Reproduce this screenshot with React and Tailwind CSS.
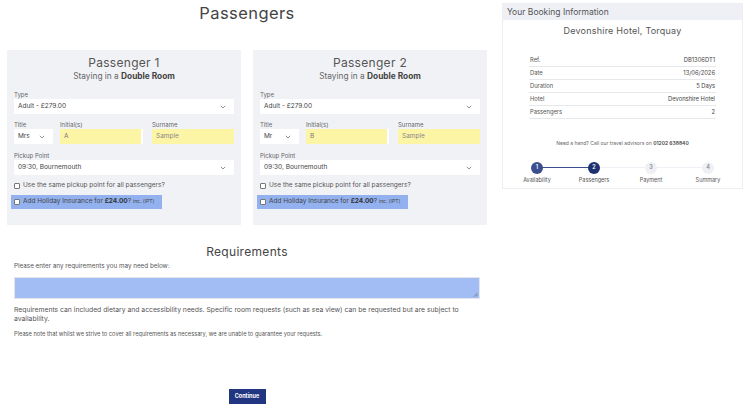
import React from 'react';

const body = { fontFamily: 'Inter, "Noto Sans", sans-serif' };

function Chevron() {
    return (
        <svg width="6" height="4" viewBox="0 0 6 4" className="shrink-0">
            <path d="M0.8 0.8 L3 3 L5.2 0.8" fill="none" stroke="#777" strokeWidth="0.8" />
        </svg>
    );
}

function SelectBox({ value, className = '' }) {
    return (
        <div className={`h-[15px] bg-white flex items-center justify-between pl-[4px] pr-[8px] text-[6.5px] text-[#444] ${className}`}>
            <span>{value}</span>
            <Chevron />
        </div>
    );
}

function Label({ children, className = '' }) {
    return <div className={`text-[6px] leading-[9px] text-[#666] ${className}`}>{children}</div>;
}

function PassengerCard({ num, title, initial }) {
    return (
        <div className="w-[234px] bg-[#f1f2f6] px-[7px] pt-[5px] pb-[16px]">
            <div className="text-center text-[12px] leading-[16px] text-[#555] tracking-wide">Passenger {num}</div>
            <div className="text-center text-[8.3px] leading-[11px] text-[#666]">
                Staying in a <span className="font-bold text-[#444]">Double Room</span>
            </div>
            <Label className="mt-[8px]">Type</Label>
            <SelectBox value="Adult - £279.00" />
            <div className="flex mt-[6px]">
                <div className="w-[39px]">
                    <Label>Title</Label>
                    <SelectBox value={title} className="pr-[6px]" />
                </div>
                <div className="w-[83px] ml-[7px]">
                    <Label>Initial(s)</Label>
                    <div className="h-[15px] bg-[#fdf5a6] border-r-2 border-white flex items-center pl-[4px] text-[6.5px] text-[#777]">{initial}</div>
                </div>
                <div className="w-[82px] ml-[9px]">
                    <Label>Surname</Label>
                    <div className="h-[15px] bg-[#fdf5a6] flex items-center pl-[4px] text-[6.5px] text-[#888]">Sample</div>
                </div>
            </div>
            <Label className="mt-[7px]">Pickup Point</Label>
            <SelectBox value="09:30, Bournemouth" />
            <div className="flex items-center gap-[3px] mt-[5px] h-[11px] text-[6.5px] text-[#555]">
                <span className="w-[6px] h-[6px] border border-[#777] rounded-[1px] bg-white" />
                <span>Use the same pickup point for all passengers?</span>
            </div>
            <div className="flex items-center gap-[3px] mt-[4px] -ml-[3px] pl-[3px] w-[151px] h-[14px] bg-[#92b1ee] text-[6.5px] text-[#444]">
                <span className="w-[6px] h-[6px] border border-[#777] rounded-[1px] bg-white" />
                <span>
                    Add Holiday Insurance for <span className="font-bold text-[#333]">£24.00</span>? <span className="text-[5px]">inc. (IPT)</span>
                </span>
            </div>
        </div>
    );
}

function Step({ n, label, state }) {
    const circle =
        state === 'done'
            ? 'bg-[#3b4f8e] text-white'
            : state === 'active'
            ? 'bg-[#1f3170] text-white'
            : 'bg-[#eef0f5] text-[#888]';
    return (
        <div className="relative z-10 flex flex-col items-center w-[40px]">
            <div className={`w-[12px] h-[12px] rounded-full flex items-center justify-center text-[5.5px] font-semibold ${circle}`}>{n}</div>
            <div className="mt-[3px] text-[5.5px] leading-[7px] text-[#555]">{label}</div>
        </div>
    );
}

export default function App() {
    const rows = [
        ['Ref.', 'DB1306DT1'],
        ['Date', '13/06/2026'],
        ['Duration', '5 Days'],
        ['Hotel', 'Devonshire Hotel'],
        ['Passengers', '2'],
    ];
    return (
        <div className="w-[752px] h-[406px] bg-white overflow-hidden flex" style={body}>
            <div className="w-[494px] flex flex-col">
                <div className="text-center text-[16.5px] leading-[22px] mt-[2px] text-[#444] tracking-wide">Passengers</div>
                <div className="flex gap-[12px] pl-[7px] mt-[26px]">
                    <PassengerCard num={1} title="Mrs" initial="A" />
                    <PassengerCard num={2} title="Mr" initial="B" />
                </div>
                <div className="text-center text-[12px] leading-[16px] mt-[19px] text-[#444] tracking-wide">Requirements</div>
                <div className="px-[14px]">
                    <div className="text-[6.3px] leading-[9px] text-[#555] mt-[2px]">Please enter any requirements you may need below:</div>
                    <div className="relative mt-[6px] w-[466px] h-[22px] bg-[#a2bdf4] border border-[#e4e6eb]">
                        <svg width="5" height="5" viewBox="0 0 5 5" className="absolute right-[1px] bottom-[1px]">
                            <path d="M4.5 1 L1 4.5 M4.5 3 L3 4.5" stroke="#555" strokeWidth="0.6" />
                        </svg>
                    </div>
                    <div className="text-[6.8px] leading-[9px] text-[#555] mt-[6px] w-[455px]">
                        Requirements can included dietary and accessibility needs. Specific room requests (such as sea view) can be requested but are subject to availability.
                    </div>
                    <div className="text-[5.7px] leading-[8px] text-[#555] mt-[7px]">
                        Please note that whilst we strive to cover all requirements as necessary, we are unable to guarantee your requests.
                    </div>
                </div>
                <div className="flex justify-center mt-[51px]">
                    <div className="w-[37px] h-[15px] bg-[#223580] text-white text-[5.5px] font-bold flex items-center justify-center">Continue</div>
                </div>
            </div>
            <div className="w-[241px] ml-[8px] mt-[3px] h-[186px] border border-[#eceef2] flex flex-col">
                <div className="h-[16px] bg-[#eef0f5] flex items-center pl-[4px] text-[8.5px] text-[#555]">Your Booking Information</div>
                <div className="text-center text-[9px] leading-[12px] text-[#555] mt-[5px] tracking-wide">Devonshire Hotel, Torquay</div>
                <div className="mx-[26px] mt-[17px]">
                    {rows.map(([k, v]) => (
                        <div key={k} className="h-[13px] flex items-center justify-between border-b border-[#e6e8ec] px-[1px] text-[5.8px] text-[#555]">
                            <span>{k}</span>
                            <span className="text-[#444]">{v}</span>
                        </div>
                    ))}
                </div>
                <div className="text-center text-[5px] text-[#666] mt-[21px]">
                    Need a hand? Call our travel advisors on <span className="font-semibold text-[#444]">01202 638840</span>
                </div>
                <div className="relative flex justify-between mx-[14px] mt-[14px]">
                    <div className="absolute top-[5.5px] left-[20px] w-[57px] h-[1px] bg-[#3b4f8e]" />
                    <div className="absolute top-[5.5px] left-[77px] right-[20px] h-[1px] bg-[#eef0f5]" />
                    <Step n={1} label="Availability" state="done" />
                    <Step n={2} label="Passengers" state="active" />
                    <Step n={3} label="Payment" state="todo" />
                    <Step n={4} label="Summary" state="todo" />
                </div>
            </div>
        </div>
    );
}
